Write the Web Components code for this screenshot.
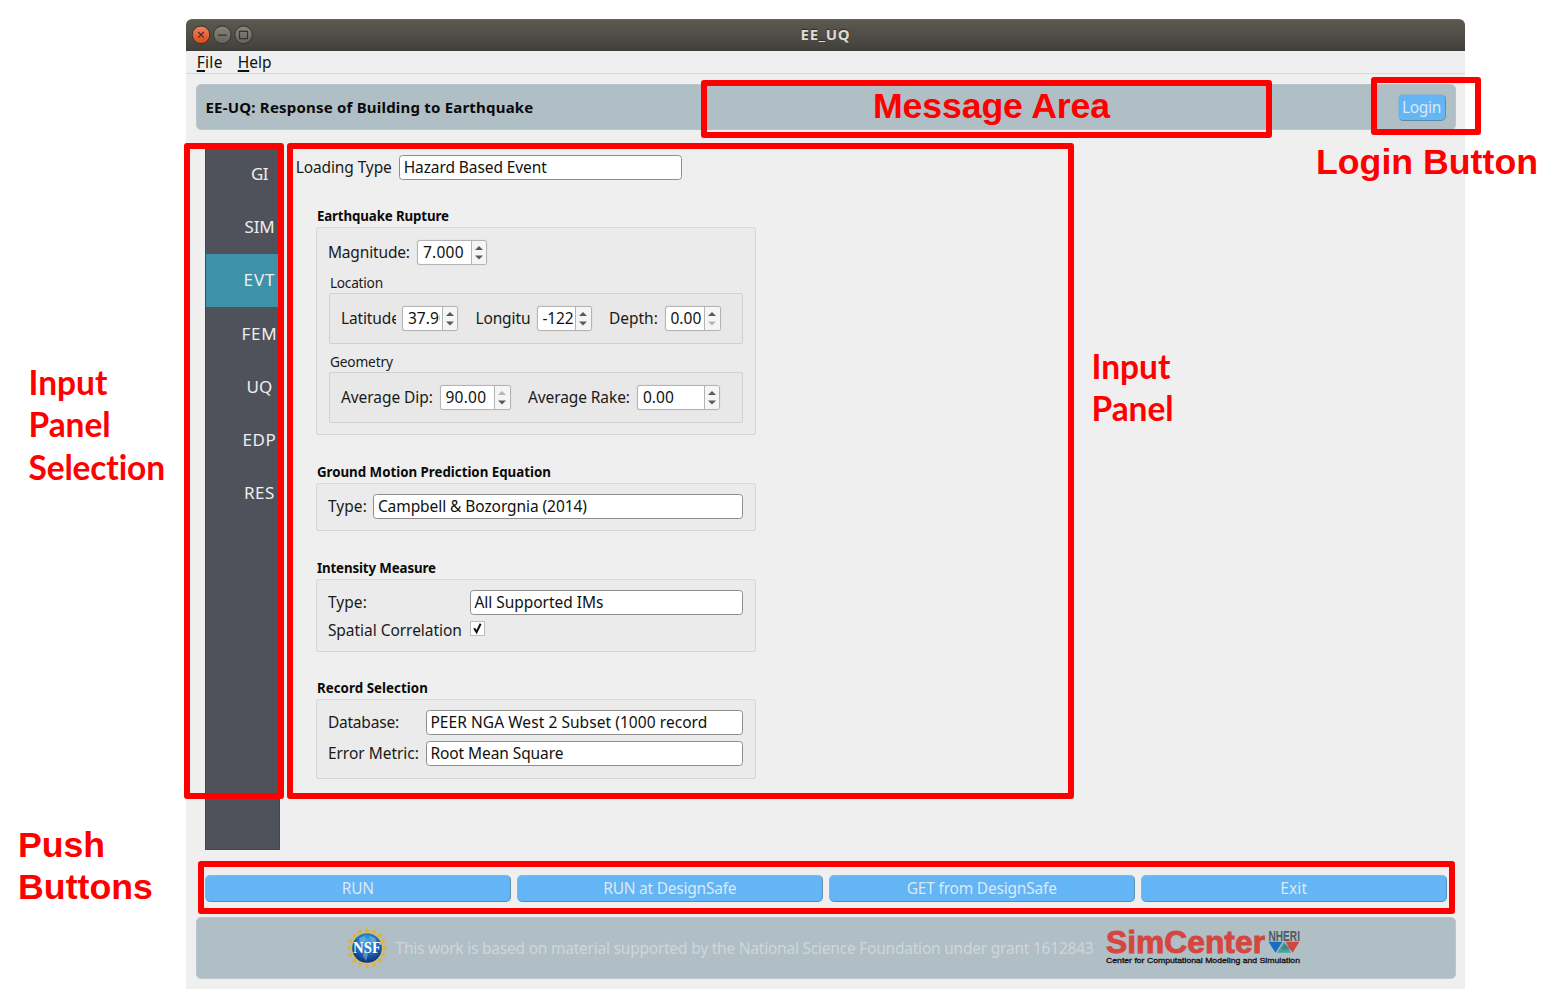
<!DOCTYPE html>
<html lang="en">
<head>
<meta charset="utf-8">
<title>EE_UQ</title>
<style>
body{margin:0;width:1553px;height:998px;background:#fff;overflow:hidden;position:relative;font:15.5px "Noto Sans","Open Sans",sans-serif;color:#1a1a1a}
app-window{margin:19px 0 0 186px}
</style>
</head>
<body>
<app-window>
  <title-bar slot="title"></title-bar>
  <menu-bar slot="menu"></menu-bar>
  <app-header slot="header"></app-header>
  <side-nav slot="nav">
    <nav-item><fit-text w="17">GI</fit-text></nav-item>
    <nav-item><fit-text w="30">SIM</fit-text></nav-item>
    <nav-item active><fit-text w="32">EVT</fit-text></nav-item>
    <nav-item><fit-text w="36">FEM</fit-text></nav-item>
    <nav-item><fit-text w="26">UQ</fit-text></nav-item>
    <nav-item><fit-text w="34">EDP</fit-text></nav-item>
    <nav-item><fit-text w="31">RES</fit-text></nav-item>
  </side-nav>
  <event-form slot="panel"></event-form>
  <push-button slot="actions" label="RUN" w="32"></push-button>
  <push-button slot="actions" label="RUN at DesignSafe" w="133"></push-button>
  <push-button slot="actions" label="GET from DesignSafe" w="150"></push-button>
  <push-button slot="actions" label="Exit" w="27"></push-button>
  <app-footer slot="footer"></app-footer>
</app-window>

<mark-box style="left:701px;top:80px;width:571px;height:58px"></mark-box>
<mark-box style="left:1371px;top:77px;width:110px;height:58px"></mark-box>
<mark-box style="left:184px;top:143px;width:100px;height:656px"></mark-box>
<mark-box style="left:287px;top:143px;width:787px;height:656px"></mark-box>
<mark-box style="left:198px;top:861px;width:1257px;height:53px"></mark-box>
<mark-label style="left:873px;top:85px"><fit-text w="237">Message Area</fit-text></mark-label>
<mark-label style="left:1316px;top:141px"><fit-text w="222">Login Button</fit-text></mark-label>
<mark-label style="left:18px;top:824px"><fit-text w="87">Push</fit-text><fit-text w="135">Buttons</fit-text></mark-label>
<mark-label lato style="left:28.5px;top:361px"><fit-text w="79">Input</fit-text><fit-text w="82">Panel</fit-text><fit-text w="137">Selection</fit-text></mark-label>
<mark-label lato style="left:1091.5px;top:345px"><fit-text w="79">Input</fit-text><fit-text w="82">Panel</fit-text></mark-label>

<script>
const def=(name,html,init)=>customElements.define(name,class extends HTMLElement{
  connectedCallback(){
    if(this.shadowRoot)return;
    const root=this.attachShadow({mode:'open'});
    root.innerHTML='<style>*{box-sizing:border-box}:host{display:block;box-sizing:border-box}</style>'+(typeof html==='function'?html(this):html);
    if(init)init(this,root);
  }
});
const attr=(el,n,d='')=>el.getAttribute(n)??d;

def('app-window',`<style>
:host{width:1279px;height:970px;background:#efefef;border-radius:6px 6px 0 0;overflow:hidden}
main{display:flex;height:703px;margin:17px 0 0 19px}
.actions{display:grid;grid-template-columns:repeat(4,1fr);gap:6.5px;margin:24.5px 18.5px 0 19px;height:27px}
.footer{margin:15.5px 9.5px 0}
</style>
<slot name="title"></slot><slot name="menu"></slot><slot name="header"></slot>
<main><slot name="nav"></slot><slot name="panel"></slot></main>
<div class="actions"><slot name="actions"></slot></div>
<div class="footer"><slot name="footer"></slot></div>`);

def('title-bar',`<style>
:host{height:32px;background:linear-gradient(#66645c 0,#5a574f 2px,#504e47 50%,#403f3a 100%);display:grid;grid-template-columns:80px 1fr 80px;align-items:center}
.b{display:flex;padding-left:6px}svg{display:block}
b{justify-self:center;color:#dfdbd2;font-size:15px;font-weight:700;text-shadow:0 -1px 1px #2d2c28;line-height:20px;padding-bottom:2px}
</style>
<div class="b"><svg width="62" height="20" viewBox="0 0 62 20">
<defs><linearGradient id="o" x2="0" y2="1"><stop stop-color="#f1845f"/><stop offset="1" stop-color="#dd4814"/></linearGradient><linearGradient id="g" x2="0" y2="1"><stop stop-color="#87857c"/><stop offset="1" stop-color="#64625a"/></linearGradient></defs>
<g stroke="#35342f"><circle cx="9" cy="9.8" r="8.8" fill="url(#o)"/><circle cx="30.3" cy="9.8" r="8.8" fill="url(#g)"/><circle cx="51.5" cy="9.8" r="8.8" fill="url(#g)"/>
<path d="M6.2 7l5.6 5.6M11.8 7l-5.6 5.6M26 10.2h8.6M47.5 6.3h8v7.4h-8z" fill="none" stroke-width="1.2"/></g></svg></div>
<b><fit-text w="50">EE_UQ</fit-text></b>`);

def('menu-bar',`<style>:host{height:23px;border-bottom:1px solid #d9d9d9;display:flex;gap:15px;padding-left:10.7px;line-height:23px;color:#111}
u{text-decoration-thickness:1.5px;text-underline-offset:2px;text-decoration-skip-ink:none}</style>
<fit-text w="26"><u>F</u>ile</fit-text><fit-text w="34"><u>H</u>elp</fit-text>`);

def('app-header',`<style>:host{margin:10px 9.5px 0;height:46px;border:1px solid #b9c5ca;background:#b0bec5;border-radius:5px;display:flex;align-items:center;justify-content:space-between;padding:0 9px}
b{color:#0a0a0a;font-size:15px;padding-bottom:1px}push-button{width:48px;height:27px}</style>
<b><fit-text w="328">EE-UQ: Response of Building to Earthquake</fit-text></b><push-button label="Login" w="39"></push-button>`);

def('push-button',el=>`<style>:host{background:#64b5f6;border:1px solid #8db6cf;border-right-color:#5f8fae;border-bottom:1.5px solid #5c8cab;border-radius:5px;color:#dbe9f5;display:flex;align-items:center;justify-content:center}</style>
<fit-text w="${attr(el,'w')}">${attr(el,'label')}</fit-text>`);

def('side-nav',`<style>:host{width:75px;flex:none;background:#4f525a;border:1px solid #45474e;border-top:0}</style><slot></slot>`);
def('nav-item',`<style>:host{height:53.3px;padding:0 0 1px 34px;display:flex;align-items:center;justify-content:center;color:#eee;font-size:17px}
:host([active]){background:#3d91a8}</style><slot></slot>`);

def('group-box',el=>`<style>
header{height:22px;line-height:23px;font-size:13.3px;font-weight:bold;color:#0a0a0a;padding-left:1px}
section{height:${attr(el,'h')}px;border:1px solid #d6d6d6;border-radius:2px;background:#ebebeb;padding:${attr(el,'pad','10px 12px 0 11px')}}
:host([sub]) header{font-weight:normal;color:#1a1a1a;font-size:13.7px;line-height:23px}
:host([sub]) section{background:#e8e8e8;border-color:#d0d0d0}
</style><header><fit-text w="${attr(el,'tw')}">${attr(el,'label')}</fit-text></header><section><slot></slot></section>`);

def('combo-box',el=>`<style>:host{height:25px;flex:1;border:1px solid #8e8e8e;border-radius:3.5px;background:#fff;color:#111;padding-left:3.5px;line-height:23.5px}</style>
<fit-text w="${attr(el,'w')}">${attr(el,'value')}</fit-text>`);

def('field-label',`<style>:host{flex:none;overflow:hidden;line-height:25px;height:25px;white-space:nowrap}</style><slot></slot>`);

def('spin-box',el=>`<style>:host{height:25px;flex:none;border:1px solid #b4b4b4;border-radius:3px;background:#fff;display:flex;color:#111;overflow:hidden;box-shadow:0 0 1px #bbb}
.v{flex:1;min-width:0;overflow:hidden;margin-left:4.5px;line-height:23px;margin-right:2px}
.a{width:15.5px;flex:none;border-left:1px solid #b4b4b4;background:#f5f5f5}svg{display:block}</style>
<div class="v"><fit-text w="${attr(el,'w')}">${attr(el,'value')}</fit-text></div>
<div class="a"><svg width="14" height="23"><path d="M3 9l4-4 4 4z" fill="${attr(el,'limit')=='max'?'#b5b5b5':'#5a5a5a'}"/><path d="M3 14.5l4 4 4-4z" fill="${attr(el,'limit')=='min'?'#b5b5b5':'#5a5a5a'}"/></svg></div>`);

def('check-box',`<style>:host{width:15px;height:15px;background:#fff;border:1px solid #bdbdbd;flex:none}svg{display:block}</style>
<svg width="13" height="13"><path d="M3.2 6.3l2.4 3.8 4-8.3" fill="none" stroke="#111" stroke-width="2"/></svg>`);

def('event-form',`<style>
:host{padding:8px 0 0 15.7px;width:600px}
.row{display:flex;align-items:center}
.load{height:25px;width:386.5px}
.groups{width:440.5px;margin:25px 0 0 20.2px;display:grid;gap:25.5px}
.rows{display:grid;gap:6px}
</style>
<div class="row load"><field-label style="width:103.5px"><fit-text w="96">Loading Type</fit-text></field-label><combo-box value="Hazard Based Event" w="143"></combo-box></div>
<div class="groups">
<group-box label="Earthquake Rupture" tw="132" h="208" pad="11.5px 12px 0 11px">
  <div class="row"><field-label style="width:89.5px"><fit-text w="82">Magnitude:</fit-text></field-label><spin-box style="width:70px" value="7.000" w="41"></spin-box></div>
  <group-box sub label="Location" tw="53" h="51" pad="11.5px 0 0 11px" style="margin:6.5px 0 0 1px">
    <div class="row"><field-label style="width:55px;margin-right:6.5px"><fit-text w="63">Latitude:</fit-text></field-label><spin-box style="width:56px" value="37.90" w="40"></spin-box>
    <field-label style="width:55.5px;margin:0 6px 0 17px"><fit-text w="55">Longitu</fit-text></field-label><spin-box style="width:55px" value="-122" w="31"></spin-box>
    <field-label style="width:50px;margin:0 6px 0 17px"><fit-text w="49">Depth:</fit-text></field-label><spin-box style="width:56px" value="0.00" w="31" limit="min"></spin-box></div>
  </group-box>
  <group-box sub label="Geometry" tw="63" h="51" pad="11.5px 0 0 11px" style="margin:6px 0 0 1px">
    <div class="row"><field-label style="width:99px"><fit-text w="92">Average Dip:</fit-text></field-label><spin-box style="width:71px" value="90.00" w="41" limit="max"></spin-box>
    <field-label style="width:109.5px;margin-left:17px"><fit-text w="102">Average Rake:</fit-text></field-label><spin-box style="width:83px" value="0.00" w="31"></spin-box></div>
  </group-box>
</group-box>
<group-box label="Ground Motion Prediction Equation" tw="234" h="48.5">
  <div class="row"><field-label style="width:45.5px"><fit-text w="39">Type:</fit-text></field-label><combo-box value="Campbell &amp; Bozorgnia (2014)" w="209"></combo-box></div>
</group-box>
<group-box label="Intensity Measure" tw="119" h="73">
  <div class="row"><field-label style="width:142px"><fit-text w="39">Type:</fit-text></field-label><combo-box value="All Supported IMs" w="129"></combo-box></div>
  <div class="row" style="margin-top:3px"><field-label style="width:142px"><fit-text w="134">Spatial Correlation</fit-text></field-label><check-box style="margin-top:-3px"></check-box></div>
</group-box>
<group-box label="Record Selection" tw="111" h="80" pad="10px 12px 0 11px">
  <div class="rows"><div class="row"><field-label style="width:98px"><fit-text w="71">Database:</fit-text></field-label><combo-box value="PEER NGA West 2 Subset (1000 record" w="277"></combo-box></div>
  <div class="row"><field-label style="width:98px"><fit-text w="91">Error Metric:</fit-text></field-label><combo-box value="Root Mean Square" w="133"></combo-box></div></div>
</group-box>
</div>`);

def('app-footer',`<style>:host{height:62px;background:#b0bec5;border:1px solid #bac6cb;border-radius:5px;display:flex;align-items:center;padding-left:149.5px;color:#cfd6da}
.t{margin:0 12px 0 7.5px}</style>
<nsf-logo></nsf-logo><div class="t"><fit-text w="698">This work is based on material supported by the National Science Foundation under grant 1612843</fit-text></div><simcenter-logo></simcenter-logo>`);

def('nsf-logo',`<style>:host{width:42px;height:42px;flex:none}svg{display:block}</style>
<svg width="42" height="42" viewBox="-21 -21 42 42"><defs><radialGradient id="n" cx=".5" cy=".3" r=".7"><stop stop-color="#4aaee6"/><stop offset=".5" stop-color="#1f6fbe"/><stop offset="1" stop-color="#0c2f7e"/></radialGradient></defs>
<g id="r" fill="#d9b548"></g><circle r="16" fill="#d8c069"/><circle r="14.8" fill="url(#n)"/>
<path d="M-8-10l5-2 2 3-3 4-3 1zM2-12l6 2 2 5-5-1zM-3 3l4 3-2 7-3-5z" fill="#83cdea" opacity=".5"/>
<text y="5" text-anchor="middle" textLength="28" lengthAdjust="spacingAndGlyphs" font-family="Liberation Serif,serif" font-weight="bold" font-size="16" fill="#fff">NSF</text></svg>`,(el,root)=>{
  let s='';for(let i=0;i<16;i++)s+=`<path transform="rotate(${i*22.5})" d="M-3-14.5L-1.3-16.6-2.4-17.5 0-20.8 2.4-17.5 1.3-16.6 3-14.5z"/>`;
  root.querySelector('#r').innerHTML=s;
});

def('simcenter-logo',`<style>:host{width:197px;height:42px;flex:none}svg{display:block;overflow:visible}</style>
<svg width="197" height="42" viewBox="0 0 197 42" font-family="Liberation Sans,sans-serif">
<text x="0" y="25.8" font-size="31" font-weight="bold" fill="#d4463f" stroke="#d4463f" stroke-width=".9" textLength="159" lengthAdjust="spacingAndGlyphs">SimCenter</text>
<text x="162.5" y="14" font-size="15.5" font-weight="bold" fill="#535b60" textLength="31.5" lengthAdjust="spacingAndGlyphs">NHERI</text>
<path d="M162.5 14.8h14l-7 11z" fill="#176bc7"/><path d="M179.500 14.8h14l-7 11z" fill="#d4463f"/><path d="M171 25.8l7-11 7 11z" fill="#43a69b"/><path d="M175 22.5l3-5h2l7 5z" fill="#555d60" opacity=".5"/>
<text x="0" y="36.3" font-size="8" fill="#111" stroke="#111" stroke-width=".3" textLength="194" lengthAdjust="spacingAndGlyphs">Center for Computational Modeling and Simulation</text></svg>`);

def('mark-box',`<style>:host{position:absolute;border:6.3px solid #f00;border-radius:3px}</style>`);
def('mark-label',`<style>:host{position:absolute;color:#f00;font:bold 35.7px/42px "Liberation Sans",sans-serif;display:flex;flex-direction:column}
:host([lato]){font:bold 33.5px/42.3px Lato,sans-serif}</style><slot></slot>`);

/* Spreads its text over the width w, in px, by adjusting the tracking. */
def('fit-text',`<style>:host{white-space:nowrap;flex:none}span{display:inline-block;white-space:nowrap}</style><span><slot></slot></span>`,(el,root)=>{
  const w=+attr(el,'w'),s=root.querySelector('span'),n=s.getBoundingClientRect().width;
  el.style.width=w+'px';
  s.style.letterSpacing=(w-n)/Math.max(1,el.textContent.length)+'px';
});
</script>
</body>
</html>
